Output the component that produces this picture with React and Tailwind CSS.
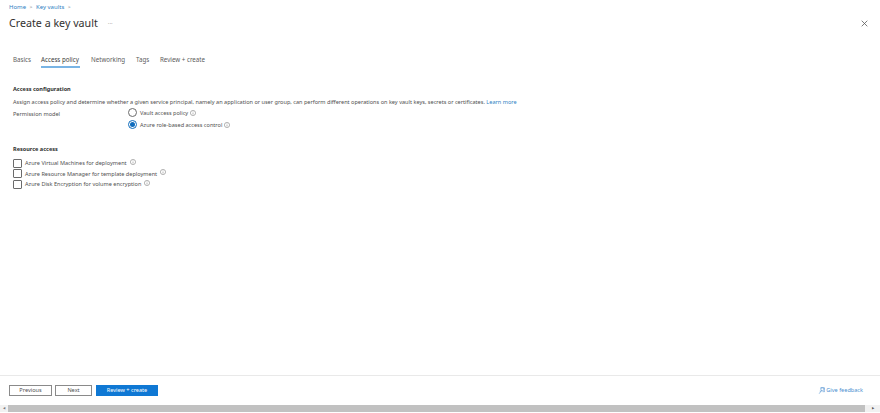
import React from "react";

const Info = ({ className = "" }) => (
  <svg className={className} width="6" height="6" viewBox="0 0 12 12" fill="none" stroke="#6f6f6f" strokeWidth="1">
    <circle cx="6" cy="6" r="5.2" />
    <path d="M6 5.2V9M6 3v1.2" />
  </svg>
);

const Check = ({ label, iconClass }) => (
  <div className="flex items-center h-[10.5px]">
    <span className="w-[9px] h-[9px] border border-[#6b6b6b] rounded-[1px] bg-white mr-[3px] box-border" />
    <span className="text-[#505050]">{label}</span>
    <Info className={iconClass} />
  </div>
);

export default function App() {
  return (
    <div className="w-[880px] h-[413px] bg-white flex flex-col overflow-hidden text-[5.57px] leading-[8px] text-[#505050] font-['Noto_Sans','Open_Sans',sans-serif]">
      <div className="h-[375px] px-[9px] pt-[3px] flex flex-col shrink-0">
        <div className="flex items-center h-[8px] text-[6px] text-[#2f7fc4] gap-[3.5px]">
          <span>Home</span>
          <span className="text-[#777] text-[5px]">&gt;</span>
          <span>Key vaults</span>
          <span className="text-[#777] text-[5px]">&gt;</span>
        </div>
        <div className="flex items-center mt-[4px] h-[16px]">
          <h1 className="text-[10.7px] leading-[16px] text-[#323130] font-normal">Create a key vault</h1>
          <span className="ml-[10px] text-[#666] text-[6px] -mt-[1px]">···</span>
          <svg className="ml-auto mr-[3px] mt-[1px]" width="7" height="7" viewBox="0 0 7 7" stroke="#5a5a5a" strokeWidth="0.8">
            <path d="M.7.7l5.6 5.6M6.3.7L.7 6.3" />
          </svg>
        </div>
        <div className="flex mt-[25px] ml-[4px] h-[13px] text-[#5c5c5c] text-[6.2px]">
          <span className="w-[28px]">Basics</span>
          <span className="w-[39px] mr-[11px] h-[12px] border-b-2 border-[#79b4e4] text-[#3d3d3d] whitespace-nowrap">Access policy</span>
          <span className="w-[33px] mr-[12px]">Networking</span>
          <span className="w-[12px] mr-[12px]">Tags</span>
          <span className="whitespace-nowrap">Review + create</span>
        </div>
        <div className="mt-[16px] ml-[4px] flex flex-col">
          <h2 className="font-bold text-[#2e2e2e] h-[8px]">Access configuration</h2>
          <p className="mt-[5px] whitespace-nowrap">
            Assign access policy and determine whether a given service principal, namely an application or user group, can perform different operations on key vault keys, secrets or certificates.{" "}
            <span className="text-[#2f7fc4]">Learn more</span>
          </p>
          <div className="flex mt-[2px]">
            <div className="w-[115px] pt-[2px]">Permission model</div>
            <div className="flex flex-col gap-[3px]">
              <div className="flex items-center h-[9px]">
                <span className="w-[9px] h-[9px] rounded-full border border-[#6b6b6b] mr-[3px] box-border" />
                <span>Vault access policy</span>
                <Info className="ml-[2px]" />
              </div>
              <div className="flex items-center h-[9px]">
                <span className="w-[9px] h-[9px] rounded-full border border-[#0f6cbd] mr-[3px] box-border flex items-center justify-center">
                  <span className="w-[5px] h-[5px] rounded-full bg-[#0f6cbd]" />
                </span>
                <span>Azure role-based access control</span>
                <Info className="ml-[2px]" />
              </div>
            </div>
          </div>
          <h2 className="font-bold text-[#2e2e2e] mt-[16px] h-[8px]">Resource access</h2>
          <div className="mt-[5px] flex flex-col">
            <Check label="Azure Virtual Machines for deployment" iconClass="ml-[3px] -mt-[3px]" />
            <Check label="Azure Resource Manager for template deployment" iconClass="ml-[3px] -mt-[3px]" />
            <Check label="Azure Disk Encryption for volume encryption" iconClass="ml-[3px] -mt-[3px]" />
          </div>
        </div>
      </div>
      <div className="h-[30px] border-t border-[#e9e9e9] px-[9px] flex items-center shrink-0 pb-[1px]">
        <button className="w-[43px] h-[11px] border border-[#8a8a8a] text-[#505050] flex items-center justify-center">Previous</button>
        <button className="ml-[3px] w-[37px] h-[11px] border border-[#8a8a8a] text-[#505050] flex items-center justify-center">Next</button>
        <button className="ml-[4px] w-[62px] h-[11px] bg-[#0f78d4] text-white flex items-center justify-center">Review + create</button>
        <div className="ml-auto mr-[8px] flex items-center text-[#4b8fd0] gap-[1px]">
          <svg width="7" height="7" viewBox="0 0 12 12" fill="none" stroke="#4b8fd0" strokeWidth="1">
            <circle cx="7.5" cy="3.5" r="2.8" />
            <path d="M4 1.5h7.5V8H8M6 6L2 11.5M3 7h3" />
          </svg>
          <span>Give feedback</span>
        </div>
      </div>
      <div className="h-[7px] mb-px bg-[#f1f1f1] flex items-center shrink-0">
        <span className="w-[8px] text-center text-[#777] text-[3px] leading-none">◀</span>
        <div className="h-full flex-1 bg-[#c1c1c1]" />
        <span className="w-[15px] text-center text-[#555] text-[3px] leading-none">▶</span>
      </div>
    </div>
  );
}
